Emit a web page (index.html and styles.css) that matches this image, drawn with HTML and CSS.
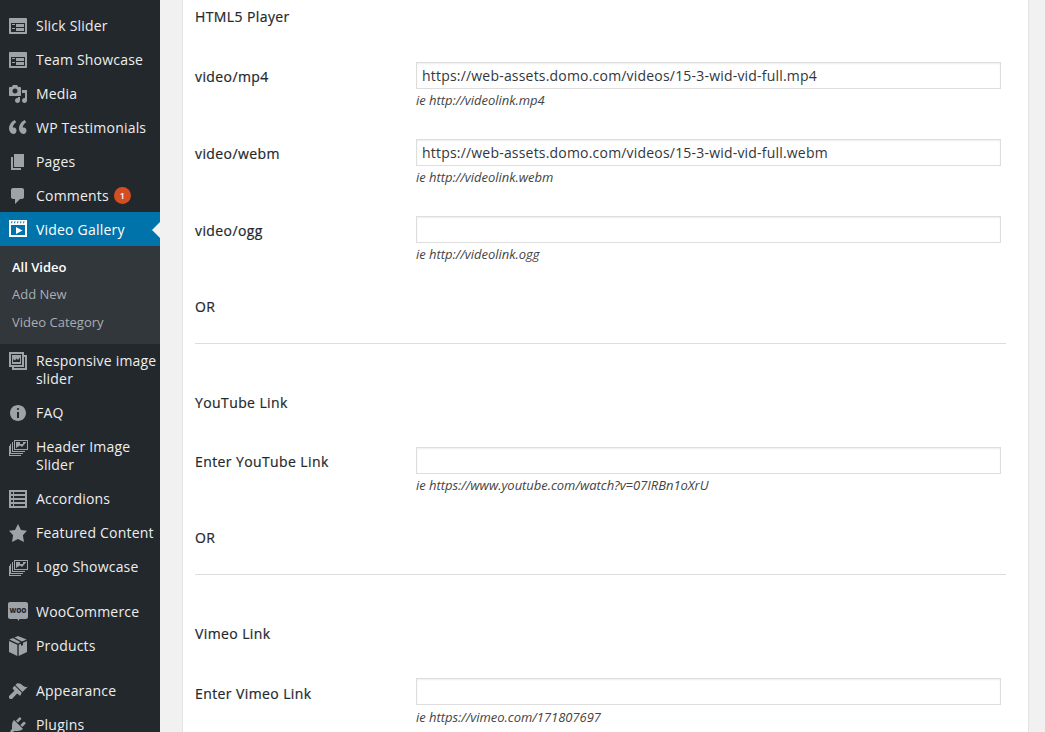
FILE: index.html
```html
<!DOCTYPE html>
<html lang="en">
<head>
<meta charset="utf-8">
<title>Video Gallery</title>
<link rel="stylesheet" href="styles.css">
</head>
<body>
<div class="page">
<nav class="sidebar">
  <ul class="menu">
    <li class="item"><svg class="icon" viewBox="0 0 20 20"><path fill-rule="evenodd" d="M2 2h16c.55 0 1 .45 1 1v14c0 .55-.45 1-1 1H2c-.55 0-1-.45-1-1V3c0-.55.45-1 1-1zm1 5v9h14V7H3zm1 1h3v1H4V8zm4 0h8v3H8V8zm-4 4h3v1H4v-1zm4 0h8v3H8v-3z"/></svg><span class="name">Slick Slider</span></li>
    <li class="item"><svg class="icon" viewBox="0 0 20 20"><path fill-rule="evenodd" d="M2 2h16c.55 0 1 .45 1 1v14c0 .55-.45 1-1 1H2c-.55 0-1-.45-1-1V3c0-.55.45-1 1-1zm1 5v9h14V7H3zm1 1h3v1H4V8zm4 0h8v3H8V8zm-4 4h3v1H4v-1zm4 0h8v3H8v-3z"/></svg><span class="name">Team Showcase</span></li>
    <li class="item"><svg class="icon" viewBox="0 0 20 20"><path fill-rule="evenodd" d="M13 11V4c0-.55-.45-1-1-1h-1.67L9 1H5L3.67 3H2c-.55 0-1 .45-1 1v7c0 .55.45 1 1 1h10c.55 0 1-.45 1-1zM7 4.500c1.380 0 2.500 1.120 2.500 2.500S8.380 9.500 7 9.500 4.500 8.380 4.500 7 5.620 4.500 7 4.500zM14 6h5v10.500c0 1.380-1.120 2.500-2.500 2.500S14 17.880 14 16.500s1.120-2.500 2.500-2.500c.17 0 .34.02.5.05V9h-3V6zm-4 8.050V13h2v3.500c0 1.380-1.120 2.500-2.500 2.500S7 17.880 7 16.500 8.120 14 9.500 14c.17 0 .34.02.5.05z"/></svg><span class="name">Media</span></li>
    <li class="item"><svg class="icon" viewBox="0 0 20 20"><path d="M8.540 12.740c0-.87-.24-1.610-.72-2.220-.73-.92-2.140-1.030-2.960-.85-.34-1.930 1.300-4.390 3.420-5.450L6.650 2C3.450 3.600.71 7.240 1.100 11.080 1.350 13.480 2.740 16 5.700 16c1.560 0 2.840-1.880 2.840-3.260zm9.970 0c0-.87-.24-1.610-.72-2.220-.73-.92-2.140-1.030-2.960-.85-.34-1.930 1.300-4.390 3.420-5.450L16.620 2c-3.200 1.600-5.940 5.240-5.550 9.080.24 2.400 1.640 4.920 4.600 4.920 1.560 0 2.840-1.880 2.840-3.260z"/></svg><span class="name">WP Testimonials</span></li>
    <li class="item"><svg class="icon" viewBox="0 0 20 20"><path d="M6 15V2h10v13H6zm-1 1h8v2H3V5h2v11z"/></svg><span class="name">Pages</span></li>
    <li class="item"><svg class="icon" viewBox="0 0 20 20"><path d="M5 2h9c1.100 0 2 .9 2 2v7c0 1.100-.9 2-2 2h-2l-5 5v-5H5c-1.100 0-2-.9-2-2V4c0-1.100.9-2 2-2z"/></svg><span class="name">Comments<span class="badge">1</span></span></li>
    <li class="item active"><svg class="icon" viewBox="0 0 20 20"><path fill-rule="evenodd" d="M1 0h18v17H1V0zm2 5v10h14V5H3zm5 2l6.500 3.500L8 14V7zM3.500 1.300L3 3.300h1l.5-2h-1zm3 0L6 3.300h1l.5-2h-1zm3 0L9 3.300h1l.5-2h-1zm3 0l-.5 2h1l.5-2h-1zm3 0l-.5 2h1l.5-2h-1z"/></svg><span class="name">Video Gallery</span></li>
    <li class="sub">
      <a class="sub-link current">All Video</a>
      <a class="sub-link">Add New</a>
      <a class="sub-link">Video Category</a>
    </li>
    <li class="item"><svg class="icon" viewBox="0 0 20 20"><path fill-rule="evenodd" d="M1 1h15v3h3v15H4v-3H1V1zm2 2v11h11V3H3zm1 1h9v9H4V4zm1 7h7V6.500l-2 2.500-1.500-1.500L7 9.500 5 8v3zM16 6v10H6v1h11V6h-1z"/></svg><span class="name">Responsive image slider</span></li>
    <li class="item"><svg class="icon" viewBox="0 0 20 20"><path fill-rule="evenodd" d="M10 2c4.420 0 8 3.580 8 8s-3.580 8-8 8-8-3.580-8-8 3.580-8 8-8zm1 4c0-.55-.45-1-1-1s-1 .45-1 1 .45 1 1 1 1-.45 1-1zm0 9V9H9v6h2z"/></svg><span class="name">FAQ</span></li>
    <li class="item"><svg class="icon" viewBox="0 0 20 20"><path fill-rule="evenodd" d="M6 3h14v10H6V3zm1 1v8h12V4H7zm1 7l4-2.500 2 1.500 4-4.500V5h-3v2h-3V5H8v6zM4 5h1v9h12v1H4V5zM2 7h1v9h12v1H2V7zM1 9v10h12v-1H2V9H1z"/></svg><span class="name">Header Image Slider</span></li>
    <li class="item"><svg class="icon" viewBox="0 0 20 20"><path fill-rule="evenodd" d="M1 1h18v18H1V1zm2 2v2h2V3H3zm3 0v2h11V3H6zM3 7v2h2V7H3zm3 0v2h11V7H6zm-3 4v2h2v-2H3zm3 0v2h11v-2H6zm-3 4v2h2v-2H3zm3 0v2h11v-2H6z"/></svg><span class="name">Accordions</span></li>
    <li class="item"><svg class="icon" viewBox="0 0 20 20"><path d="M10 1l3 6 6 .75-4.120 4.620L16 19l-6-3-6 3 1.130-6.630L1 7.750 7 7z"/></svg><span class="name">Featured Content</span></li>
    <li class="item"><svg class="icon" viewBox="0 0 20 20"><path fill-rule="evenodd" d="M6 3h14v10H6V3zm1 1v8h12V4H7zm1 7l4-2.500 2 1.500 4-4.500V5h-3v2h-3V5H8v6zM4 5h1v9h12v1H4V5zM2 7h1v9h12v1H2V7zM1 9v10h12v-1H2V9H1z"/></svg><span class="name">Logo Showcase</span></li>
    <li class="separator"></li>
    <li class="item"><svg class="icon" viewBox="0 0 20 20"><path d="M2 0h16c1.100 0 2 .9 2 2v13c0 1.100-.9 2-2 2h-6.500l-1 2-1-2H2c-1.100 0-2-.9-2-2V2C0 .9.9 0 2 0z"/><text class="woo" x="10" y="11" text-anchor="middle">WOO</text></svg><span class="name">WooCommerce</span></li>
    <li class="item"><svg class="icon" viewBox="0 0 20 20"><path d="M10 0l8.700 3.400L14 5.500 6.500 1.400 10 0zM5 2l7.500 4.200L10 7.400 1.300 3.400 5 2zM1 5l8.300 3.800V20L1 16V5zm18 0v11l-8.300 4V8.800L13 7.700V10l2-1V6.800L19 5z"/></svg><span class="name">Products</span></li>
    <li class="separator"></li>
    <li class="item"><svg class="icon" viewBox="0 0 20 20"><path d="M14.480 11.060L7.410 3.990l1.500-1.500c.5-.56 2.300-.47 3.510.32 1.210.8 1.430 1.280 2.910 2.100 1.180.64 2.450 1.260 4.450.85l-5.300 5.300zm-.71.71L6.700 4.700 4.930 6.470c-.39.39-.39 1.020 0 1.410l1.060 1.060c.39.39.39 1.030 0 1.420L1.500 14.500c-.8.8-.8 2.200 0 3s2.200.8 3 0l4.140-4.400c.39-.39 1.030-.39 1.420 0l1.060 1.060c.39.39 1.020.39 1.410 0l1.240-2.390z"/></svg><span class="name">Appearance</span></li>
    <li class="item"><svg class="icon" viewBox="0 0 20 20"><path d="M13.110 4.360L9.870 7.600 8 5.730l3.240-3.240c.35-.34 1.050-.2 1.560.32.52.51.66 1.210.31 1.550zm-8 1.770l.91-1.120 9.010 9.010-1.190.84c-.71.71-2.630 1.160-3.820 1.160H6.140L4.900 17.260c-.59.59-1.540.59-2.120 0-.59-.58-.59-1.530 0-2.120l1.240-1.240v-3.880c0-1.130.4-3.190 1.090-3.890zm7.260 3.970l3.240-3.240c.34-.35 1.040-.21 1.550.31.52.51.66 1.210.31 1.550l-3.240 3.250z"/></svg><span class="name">Plugins</span></li>
  </ul>
</nav>
<main class="content">
  <section class="card">
    <h3 class="heading first">HTML5 Player</h3>
    <div class="field">
      <label class="label">video/mp4</label>
      <div class="control"><input class="input" type="text" value="https://web-assets.domo.com/videos/15-3-wid-vid-full.mp4"><p class="hint">ie http://videolink.mp4</p></div>
    </div>
    <div class="field">
      <label class="label">video/webm</label>
      <div class="control"><input class="input" type="text" value="https://web-assets.domo.com/videos/15-3-wid-vid-full.webm"><p class="hint">ie http://videolink.webm</p></div>
    </div>
    <div class="field">
      <label class="label">video/ogg</label>
      <div class="control"><input class="input" type="text" value=""><p class="hint">ie http://videolink.ogg</p></div>
    </div>
    <p class="or">OR</p>
    <hr class="rule">
    <h3 class="heading">YouTube Link</h3>
    <div class="field">
      <label class="label">Enter YouTube Link</label>
      <div class="control"><input class="input" type="text" value=""><p class="hint">ie https://www.youtube.com/watch?v=07IRBn1oXrU</p></div>
    </div>
    <p class="or">OR</p>
    <hr class="rule">
    <h3 class="heading">Vimeo Link</h3>
    <div class="field">
      <label class="label">Enter Vimeo Link</label>
      <div class="control"><input class="input" type="text" value=""><p class="hint">ie https://vimeo.com/171807697</p></div>
    </div>
  </section>
</main>
</div>
</body>
</html>
```
FILE: styles.css
```css
* { box-sizing: border-box; }
html, body { margin: 0; height: 100%; overflow: hidden; }
body { background: #f1f1f1; font-family: "Open Sans", sans-serif; font-size: 14px; color: #23282d; }
.page { display: flex; height: 732px; overflow: hidden; }
.sidebar { width: 160px; flex: none; background: #23282d; height: 100%; overflow: hidden; padding-top: 8px; }
.menu { list-style: none; margin: 0; padding: 0; }
.item { display: flex; align-items: flex-start; position: relative; color: #eee; font-size: 14px; line-height: 18px; letter-spacing: .2px; padding: 8px 2px 8px 8px; }
.item:nth-child(-n+7) { padding-top: 9px; padding-bottom: 7px; }
.icon { width: 20px; height: 20px; flex: none; margin: -1px 0; fill: #9ea3a8; }
.name { margin-left: 8px; }
.badge { display: inline-block; vertical-align: top; width: 17px; height: 17px; margin: 0 0 0 5px; border-radius: 50%; background: #d54e21; color: #fff; font-size: 9px; font-weight: 600; line-height: 17px; text-align: center; letter-spacing: 0; }
.active { background: #0073aa; color: #fff; }
.active .icon { fill: #fff; }
.active::after { content: ""; position: absolute; right: 0; top: 10px; border: 8px solid transparent; border-left-width: 0; border-right-color: #f1f1f1; }
.sub { background: #32373c; padding: 7px 0 8px; }
.sub-link { display: block; padding: 5px 12px; font-size: 13px; line-height: 18px; color: #a9aeb3; }
.current { padding-bottom: 4px; color: #fff; font-weight: 600; }
.separator { height: 11px; }
.woo { font-family: "Open Sans", sans-serif; font-size: 6.500px; font-weight: 800; letter-spacing: 0; fill: #23282d; }
.content { flex: 1; padding-left: 22px; padding-right: 16px; }
.card { height: 100%; background: #fff; border-left: 1px solid #e5e5e5; border-right: 1px solid #e5e5e5; padding: 0 22px 0 12px; box-shadow: 0 1px 1px rgba(0,0,0,.04); }
.heading { margin: 0 0 34px; padding-top: 49px; font-size: 14px; font-weight: 400; line-height: 20px; letter-spacing: .4px; -webkit-text-stroke: .2px #23282d; color: #23282d; }
.heading.first { padding-top: 7px; margin-bottom: 35px; }
.field { display: grid; grid-template-columns: 221px 585px; height: 77px; }
.label { font-weight: 400; line-height: 20px; letter-spacing: .4px; -webkit-text-stroke: .2px #23282d; padding-top: 5px; color: #23282d; }
.input { display: block; width: 585px; height: 27px; margin: 0; padding: 0 5px; border: 1px solid #ddd; border-radius: 0; box-shadow: inset 0 1px 2px rgba(0,0,0,.07); background: #fff; font-family: "Open Sans", sans-serif; font-size: 14px; letter-spacing: .196px; color: #32373c; outline: 0; }
.hint { margin: 1px 0 0; font-size: 13px; line-height: 20px; letter-spacing: -.03px; font-style: italic; color: #444; }
.field:last-child .label { padding-top: 6px; }
.field:last-child .hint { margin-top: 2px; }
.or { margin: 4px 0 0; font-weight: 400; line-height: 20px; letter-spacing: .3px; -webkit-text-stroke: .2px #23282d; color: #23282d; }
.rule { height: 1px; margin: 26px 0 0; border: 0; background: #ddd; }
```
